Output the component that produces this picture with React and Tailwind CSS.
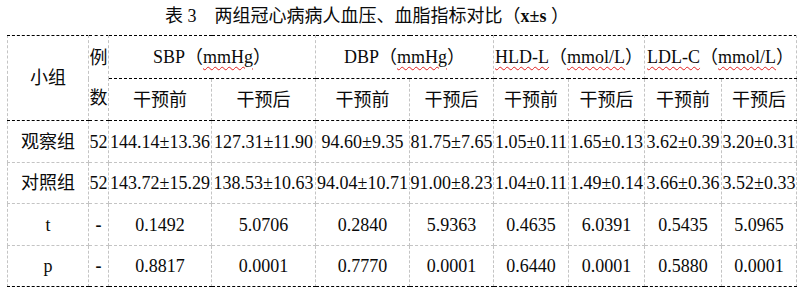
import React from "react";

// Column widths in px, left to right
const COLS = [81, 20, 103, 104, 94, 84, 75, 76, 77, 75];

const GROUPS = [
  { name: "SBP", unit: "mmHg", wavyName: false },
  { name: "DBP", unit: "mmHg", wavyName: false },
  { name: "HLD-L", unit: "mmol/L", wavyName: true },
  { name: "LDL-C", unit: "mmol/L", wavyName: true },
];

const ROWS = [
  {
    label: "观察组",
    n: "52",
    values: ["144.14±13.36", "127.31±11.90", "94.60±9.35", "81.75±7.65", "1.05±0.11", "1.65±0.13", "3.62±0.39", "3.20±0.31"],
    h: "h-[42px]",
  },
  {
    label: "对照组",
    n: "52",
    values: ["143.72±15.29", "138.53±10.63", "94.04±10.71", "91.00±8.23", "1.04±0.11", "1.49±0.14", "3.66±0.36", "3.52±0.33"],
    h: "h-[41px]",
  },
  {
    label: "t",
    n: "-",
    values: ["0.1492", "5.0706", "0.2840", "5.9363", "0.4635", "6.0391", "0.5435", "5.0965"],
    h: "h-[42px]",
  },
  {
    label: "p",
    n: "-",
    values: ["0.8817", "0.0001", "0.7770", "0.0001", "0.6440", "0.0001", "0.5880", "0.0001"],
    h: "h-[41px]",
  },
];

const Wavy = ({ children }) => (
  <span className="underline decoration-wavy decoration-[#e02020] decoration-[0.5px] underline-offset-[3px]">
    {children}
  </span>
);

const cell = "border border-dashed border-[#c4c4c4] p-0 text-center align-middle";

export default function App() {
  return (
    <div
      className="w-[804px] h-[294px] bg-white text-[#0a0a0a] text-[18px]"
      style={{ fontFamily: '"Liberation Serif", "Noto Sans CJK SC", serif' }}
    >
      {/* Title */}
      <div className="h-[35px] pt-[4px] pl-[165px] leading-[24px] whitespace-nowrap">
        表 3　两组冠心病病人血压、血脂指标对比（<span className="font-bold">x±s</span> ）
      </div>

      <table className="ml-[7px] w-[789px] table-fixed border-collapse leading-[20px]">
        <colgroup>
          {COLS.map((w, i) => (
            <col key={i} style={{ width: w }} />
          ))}
        </colgroup>
        <thead>
          <tr className="h-[43px]">
            <th rowSpan={2} className={`${cell} font-normal border-t-black border-b-black`}>
              小组
            </th>
            <th rowSpan={2} className={`${cell} font-normal border-t-black border-b-black leading-[40px]`}>
              例<br />数
            </th>
            {GROUPS.map((g) => (
              <th
                key={g.name}
                colSpan={2}
                className={`${cell} font-normal whitespace-nowrap border-t-black border-b-black`}
              >
                {g.wavyName ? <Wavy>{g.name}</Wavy> : g.name}（<Wavy>{g.unit}</Wavy>）
              </th>
            ))}
          </tr>
          <tr className="h-[42px]">
            {GROUPS.map((g) => (
              <React.Fragment key={g.name}>
                <th className={`${cell} font-normal whitespace-nowrap border-t-black border-b-black`}>干预前</th>
                <th className={`${cell} font-normal whitespace-nowrap border-t-black border-b-black`}>干预后</th>
              </React.Fragment>
            ))}
          </tr>
        </thead>
        <tbody>
          {ROWS.map((r, ri) => {
            const bottom = ri === ROWS.length - 1 ? "border-b-black" : "";
            return (
              <tr key={r.label} className={r.h}>
                <td className={`${cell} ${bottom} whitespace-nowrap`}>{r.label}</td>
                <td className={`${cell} ${bottom} whitespace-nowrap ${r.n === "-" ? "font-bold" : ""}`}>{r.n}</td>
                {r.values.map((v, vi) => (
                  <td key={vi} className={`${cell} ${bottom} whitespace-nowrap`}>
                    {v}
                  </td>
                ))}
              </tr>
            );
          })}
        </tbody>
      </table>
    </div>
  );
}
